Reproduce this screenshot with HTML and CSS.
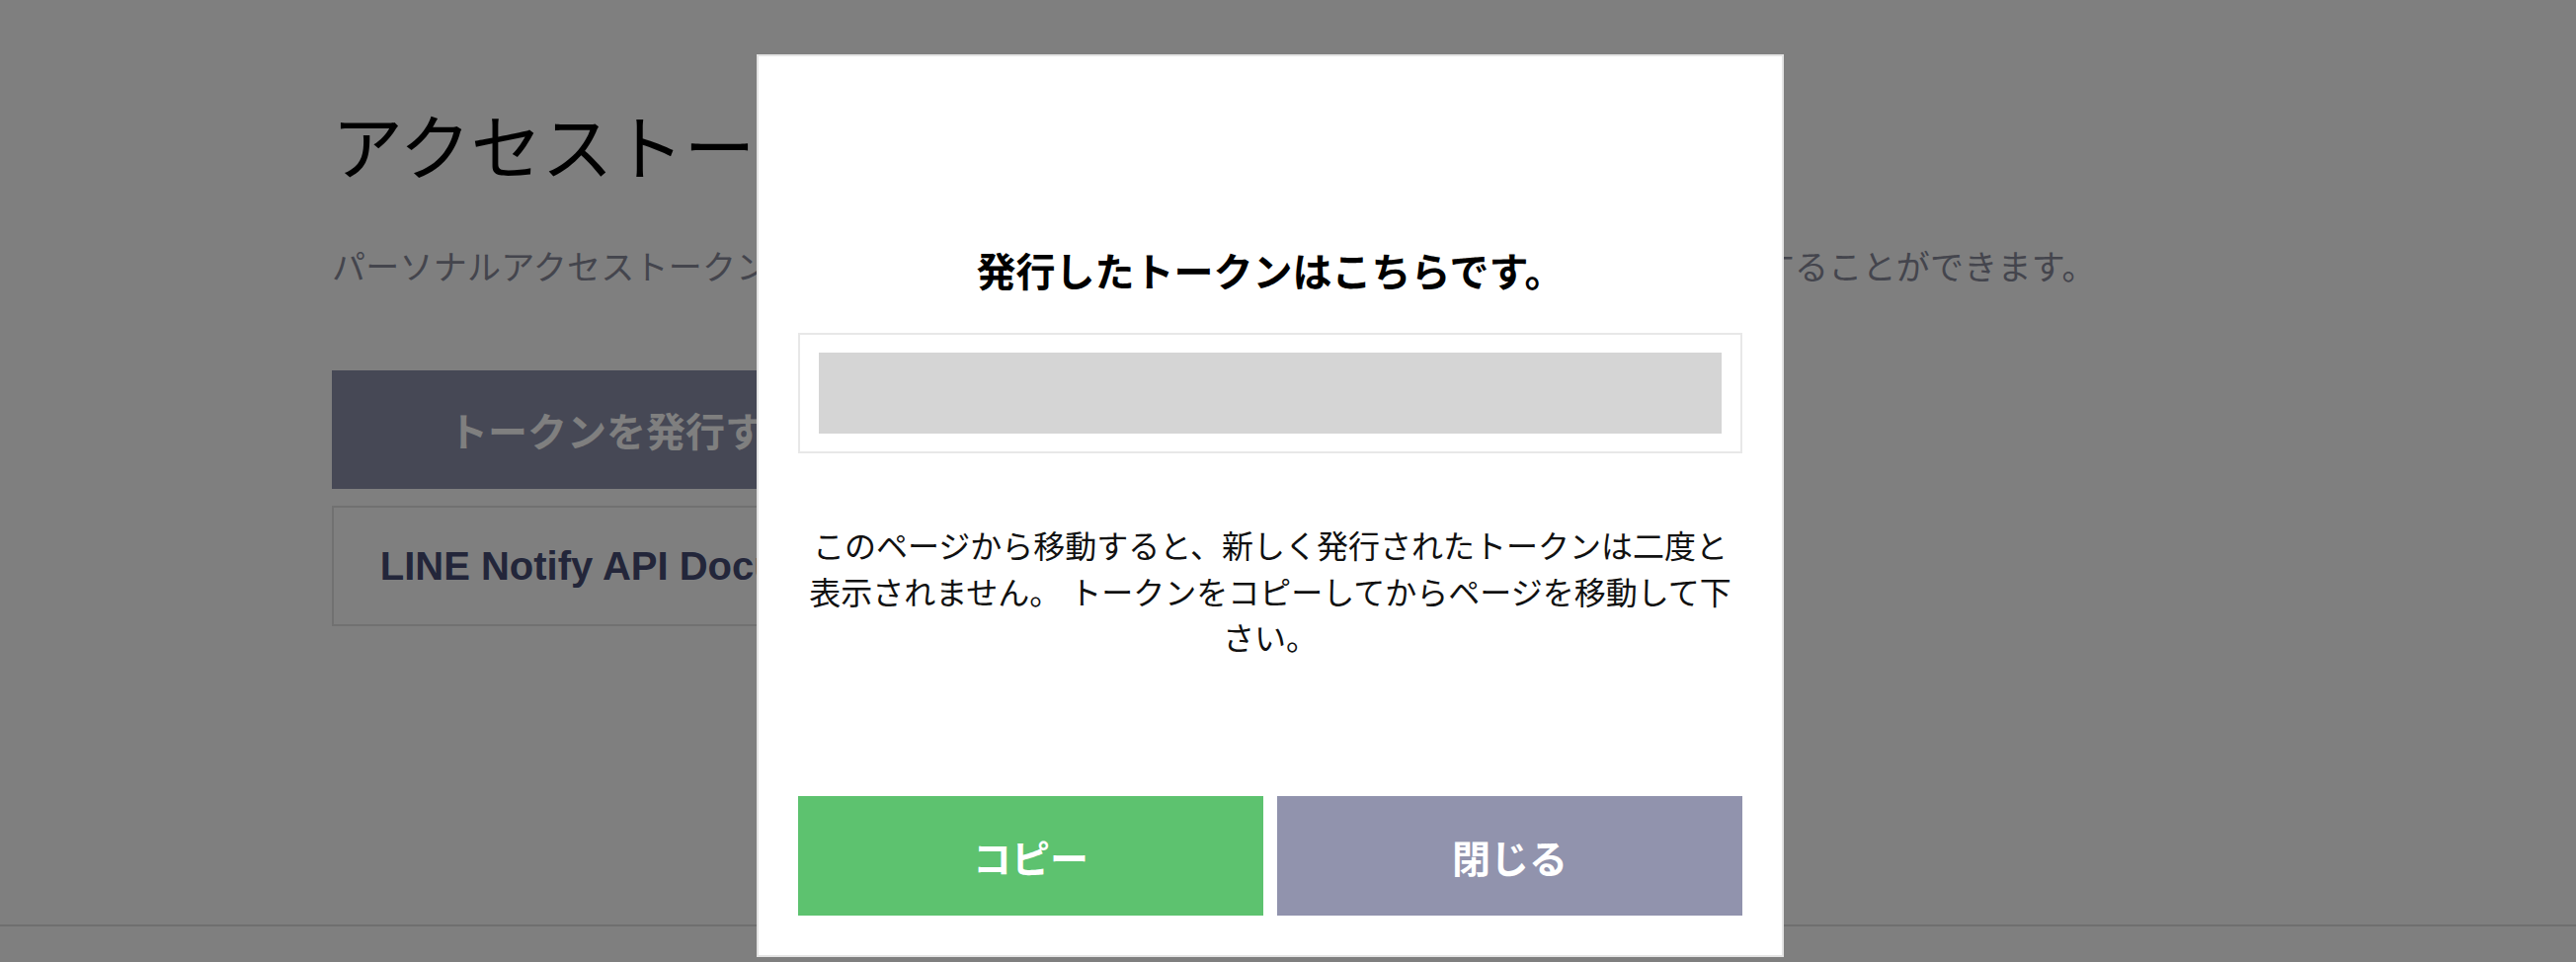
FILE: index.html
```html
<!DOCTYPE html>
<html lang="ja">
<head>
    <meta charset="UTF-8">
    <meta name="viewport" content="width=device-width, initial-scale=1.0">
    <title>LINE Notify - アクセストークンの発行</title>
    <link rel="stylesheet" href="styles.css">
</head>
<body>
    <div class="main">
        <h1 class="page-title">アクセストークンの発行(開発者向け)</h1>
        <p class="lead">パーソナルアクセストークンを利用すると、Webhookの設定をせずにLINE Notifyの通知を送信することができます。</p>
        <div class="actions">
            <button type="button" class="btn btn-issue">トークンを発行する</button>
            <a class="btn btn-doc" href="#">LINE Notify API Document</a>
        </div>
    </div>
    <footer class="footer"></footer>

    <!-- token dialog -->
    <div class="overlay"></div>
    <div class="modal">
        <h2 class="modal-title">発行したトークンはこちらです。</h2>
        <div class="token-box">
            <div class="token"></div>
        </div>
        <p class="modal-text">このページから移動すると、新しく発行されたトークンは二度と表示されません。 トークンをコピーしてからページを移動して下さい。</p>
        <div class="modal-buttons">
            <button type="button" class="modal-btn btn-copy">コピー</button>
            <button type="button" class="modal-btn btn-close">閉じる</button>
        </div>
    </div>
</body>
</html>
```

FILE: styles.css
```css
body {
    font-family: "Liberation Sans", "Noto Sans CJK JP", sans-serif;
    background-color: #fff;
    margin: 0;
    color: #000;
}
.main {
    width: 1936px;
    margin: 0 auto;
    padding: 101px 0 302px;
}
.page-title {
    font-size: 72px;
    font-weight: normal;
    line-height: 100px;
    margin: 0;
}
.lead {
    font-size: 34px;
    letter-spacing: 0.25px;
    line-height: 50px;
    color: #888a9a;
    margin: 45px 0 0;
}
.actions {
    display: flex;
    flex-direction: column;
    gap: 17px;
    width: 596px;
    margin-top: 79px;
}
.btn {
    display: flex;
    align-items: center;
    justify-content: center;
    height: 120px;
    font-family: inherit;
    font-size: 40px;
    font-weight: bold;
    text-decoration: none;
    box-sizing: border-box;
}
.btn-issue {
    background: #8c90aa;
    color: #fff;
    border: none;
}
.btn-doc {
    height: 122px;
    border: 2px solid #e2e2e2;
    color: #464c74;
}
.footer {
    border-top: 2px solid #dedede;
    height: 36px;
}
.overlay {
    position: fixed;
    top: 0;
    left: 0;
    right: 0;
    bottom: 0;
    background: rgba(0,0,0,0.5);
}
.modal {
    position: fixed;
    top: 55px;
    left: 766px;
    width: 1040px;
    height: 914px;
    box-sizing: border-box;
    background: #fff;
    border: 2px solid #e4e4e4;
    padding: 191px 40px 40px;
    display: flex;
    flex-direction: column;
}
.modal-title {
    font-size: 40px;
    line-height: 56px;
    text-align: center;
    margin: 0 0 33px;
}
.token-box {
    border: 2px solid #e8e8e8;
    padding: 18px 19px;
}
.token {
    height: 82px;
    background: #d5d5d5;
}
.modal-text {
    font-size: 32px;
    line-height: 46.5px;
    text-align: center;
    color: #111;
    margin: 72px 0 0;
}
.modal-buttons {
    display: grid;
    grid-template-columns: 1fr 1fr;
    gap: 14px;
    margin-top: auto;
}
.modal-btn {
    height: 121px;
    border: none;
    color: #fff;
    font-family: inherit;
    font-size: 39px;
    font-weight: bold;
    cursor: pointer;
}
.btn-copy {
    background: #5dc26f;
}
.btn-close {
    background: #9193ad;
}
```
